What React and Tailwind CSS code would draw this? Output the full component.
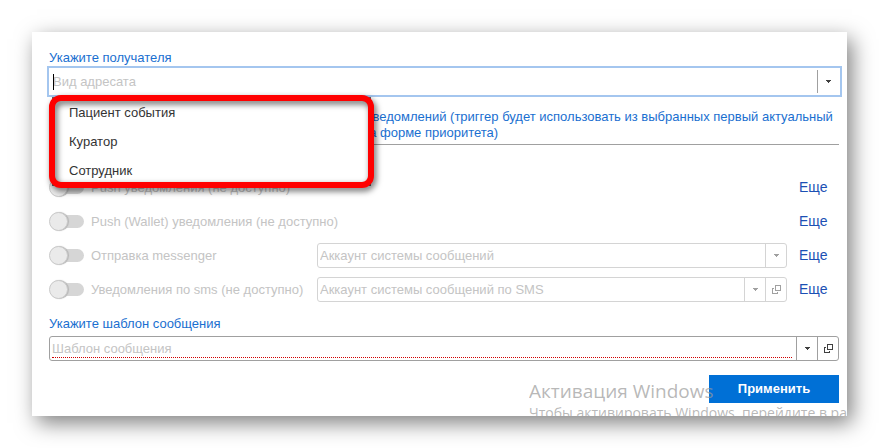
import { useState } from "react";
import clsx from "clsx";

const RECIPIENTS = ["Пациент события", "Куратор", "Сотрудник"];

const CHANNELS = [
  { id: "push", label: "Push уведомления (не доступно)" },
  { id: "wallet", label: "Push (Wallet) уведомления (не доступно)" },
  { id: "messenger", label: "Отправка messenger", account: "Аккаунт системы сообщений" },
  { id: "sms", label: "Уведомления по sms (не доступно)", account: "Аккаунт системы сообщений по SMS", popup: true },
];

function CaretIcon() {
  return (
    <svg width="5" height="3" viewBox="0 0 5 3" fill="currentColor" shapeRendering="crispEdges" aria-hidden>
      <path d="M0 0h5v1H0zM1 1h3v1H1zM2 2h1v1H2z" />
    </svg>
  );
}

function OpenIcon() {
  return (
    <svg width="9" height="9" viewBox="0 0 9 9" fill="currentColor" shapeRendering="crispEdges" aria-hidden>
      <path fillRule="evenodd" d="M3 0h6v6H3zM4 1v4h4V1z" />
      <path d="M0 3h2v1H1v4h4V7h1v2H0z" />
    </svg>
  );
}

function PickerField({ id, placeholder, popup, disabled, required }) {
  const line = disabled ? "border-[#d4d4d4]" : "border-[#a0a0a0]";
  const icon = disabled ? "text-[#a0a0a0]" : "text-[#404040]";
  const btn = clsx("flex w-[21px] shrink-0 items-center justify-center border-l", line, icon);

  return (
    <div className={clsx("flex h-[25px] min-w-0 flex-1 rounded-[3px] border bg-white", line)}>
      <div className="flex min-w-0 flex-1 pr-1 pl-[2px]">
        <input
          id={id}
          type="text"
          placeholder={placeholder}
          aria-label={placeholder}
          disabled={disabled}
          className={clsx(
            "h-[21px] min-w-0 flex-1 bg-transparent pt-[3px] outline-none placeholder:text-[#c4c4c4]",
            required && "border-b border-dotted border-[#d00000]"
          )}
        />
      </div>
      <button type="button" disabled={disabled} aria-label="Выбрать" className={btn}>
        <CaretIcon />
      </button>
      {popup && (
        <button type="button" disabled={disabled} aria-label="Открыть" className={btn}>
          <OpenIcon />
        </button>
      )}
    </div>
  );
}

function ChannelRow({ channel }) {
  return (
    <div className="flex h-[34px] items-center">
      <label className="flex shrink-0 items-center gap-[7px] text-[#c4c4c4]">
        <input type="checkbox" disabled className="sr-only" />
        <span className="flex h-[19px] w-[35px] items-center">
          <span className="z-10 size-[19px] shrink-0 rounded-full border border-[#cbcbcb] bg-[#eaeaea] shadow-[1px_0_1px_#b5b5b5]" />
          <span className="-ml-[10px] h-[13px] w-[26px] rounded-full bg-[#d6d6d6]" />
        </span>
        <span className={clsx(channel.account && "w-[219px]", "pt-px whitespace-nowrap")}>{channel.label}</span>
      </label>
      {channel.account ? (
        <div className="ml-[7px] flex min-w-0 flex-1">
          <PickerField id={channel.id} placeholder={channel.account} popup={channel.popup} disabled />
        </div>
      ) : (
        <div className="flex-1" />
      )}
      <a href="#more" className="ml-3 w-10 shrink-0 text-[14px] text-[#1c50b4]">Еще</a>
    </div>
  );
}

export default function App() {
  const [recipient, setRecipient] = useState("");

  return (
    <main className="bg-white p-8 font-['Liberation_Sans',Arial,sans-serif] text-[13px] leading-4 text-[#333]">
      <section className="bg-white shadow-[5px_7px_20px_0px_rgba(0,0,0,0.5)]">
        <form className="relative overflow-hidden pt-[18px] pr-2 pb-[13px] pl-[17px]" onSubmit={(e) => e.preventDefault()}>
          <label htmlFor="recipient" className="block text-[#1a6fd0]">Укажите получателя</label>

          <div className="relative -mr-[3px] -ml-[2px]">
            <div className="flex h-[31px] items-center border-2 border-[#a4c6ef]">
              <input
                id="recipient"
                type="text"
                value={recipient}
                onChange={(e) => setRecipient(e.target.value)}
                placeholder="Вид адресата"
                className="min-w-0 flex-1 pl-1 outline-none placeholder:text-[#c4c4c4]"
              />
              <span className="absolute left-[6px] h-4 w-px bg-black" />
              <button
                type="button"
                aria-label="Выбрать"
                className="mr-[2px] flex h-[23px] w-[21px] items-center justify-center border-l border-[#a0a0a0] text-[#404040]"
              >
                <CaretIcon />
              </button>
            </div>

            {/* Suggestions, outlined with a red marker frame */}
            <div className="absolute top-[31px] left-[5px] z-20 w-[319px] border border-[#666] bg-white">
              <ul>
                {RECIPIENTS.map((name) => (
                  <li key={name}>
                    <button type="button" onClick={() => setRecipient(name)} className="block h-[29px] w-full pl-4 text-left">
                      {name}
                    </button>
                  </li>
                ))}
              </ul>
              <div className="pointer-events-none absolute -inset-x-[4px] -inset-y-[3px] rounded-xl border-[6px] border-[#f00] drop-shadow-[2px_3px_3px_rgba(0,0,0,0.6)]" />
            </div>
          </div>

          <p className="mt-3 border-b border-[#a0a0a0] pb-[3px] pl-[313px] indent-1 whitespace-nowrap text-[#1a6fd0]">
            уведомлений (триггер будет использовать из выбранных первый актуальный
            <br />
            на форме приоритета)
          </p>

          <div className="mt-[25px]">
            {CHANNELS.map((channel) => (
              <ChannelRow key={channel.id} channel={channel} />
            ))}
          </div>

          <label htmlFor="template" className="mt-[10px] mb-1 block text-[#1a6fd0]">Укажите шаблон сообщения</label>
          <div className="flex">
            <PickerField id="template" placeholder="Шаблон сообщения" popup required />
          </div>

          <div className="mt-[14px] flex justify-end">
            <button type="submit" className="h-7 w-[130px] bg-[#0070d6] font-bold text-white">Применить</button>
          </div>

          <div className="pointer-events-none absolute right-0 bottom-0 h-[37px] w-[318px] overflow-hidden font-['Open_Sans','Noto_Sans',sans-serif] whitespace-nowrap text-[#999]/70">
            <div className="text-[19px] leading-6">Активация Windows</div>
            <div className="text-[14px] leading-5">Чтобы активировать Windows, перейдите в ра</div>
          </div>
        </form>
      </section>
    </main>
  );
}
